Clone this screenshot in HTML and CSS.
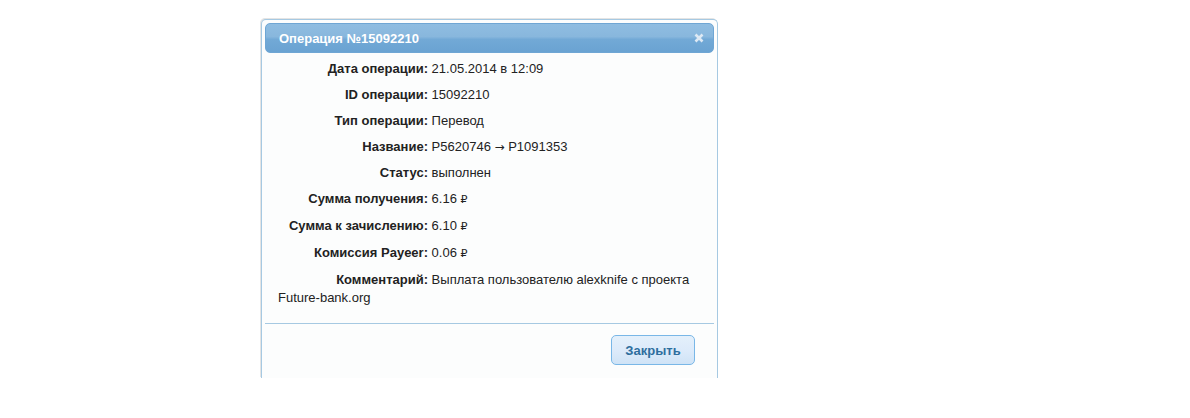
FILE: index.html
```html
<!DOCTYPE html>
<html lang="ru">
<head>
<meta charset="utf-8">
<title>Операция №15092210</title>
<link rel="stylesheet" href="styles.css">
</head>
<body>
<div class="page">
  <div class="dialog">
    <div class="titlebar">
      <span class="title">Операция №15092210</span>
      <svg class="close" width="10" height="10" viewBox="0 0 10 10"><path d="M1.5 1.5 L8.5 8.5 M8.5 1.5 L1.5 8.5" stroke="#dde9f4" stroke-width="2.6" stroke-linecap="butt"/></svg>
    </div>
    <div class="content">
      <div class="row"><span class="label">Дата операции:</span> 21.05.2014 в 12:09</div>
      <div class="row"><span class="label">ID операции:</span> 15092210</div>
      <div class="row"><span class="label">Тип операции:</span> Перевод</div>
      <div class="row"><span class="label">Название:</span> P5620746 <span class="arrow">→</span> P1091353</div>
      <div class="row"><span class="label">Статус:</span> выполнен</div>
      <div class="row"><span class="label">Сумма получения:</span> 6.16 <span class="rub">₽</span></div>
      <div class="row"><span class="label">Сумма к зачислению:</span> 6.10 <span class="rub">₽</span></div>
      <div class="row"><span class="label">Комиссия Payeer:</span> 0.06 <span class="rub">₽</span></div>
      <div class="row"><span class="label">Комментарий:</span> Выплата пользователю alexknife с проекта Future-bank.org</div>
    </div>
    <div class="buttonpane">
      <button class="btn" type="button">Закрыть</button>
    </div>
  </div>
</div>
</body>
</html>
```

FILE: styles.css
```css
html, body {
  margin: 0;
  padding: 0;
  background: #ffffff;
}

.page {
  padding: 18px 0 0 260px;
  font-family: "Liberation Sans", Arial, sans-serif;
}

.dialog {
  width: 449px;
  height: 355px;
  padding: 3px 3px 0 3px;
  border: 1px solid #a6c9e2;
  border-bottom: none;
  border-radius: 5px 5px 0 0;
  background: #fcfdfd;
  box-shadow: -1px -1px 0 #e4e4e4;
  margin-left: 1px;
  margin-top: 1px;
}

.titlebar {
  height: 28px;
  border: 1px solid #6fa6d4;
  border-radius: 5px;
  background: linear-gradient(to bottom, #8fbde1 0%, #88b7dd 45%, #72a9d6 55%, #6aa3d2 100%);
  display: flex;
  align-items: center;
  justify-content: space-between;
  padding: 0 9px 0 13px;
}

.title {
  color: #ffffff;
  font-weight: bold;
  font-size: 13px;
}

.close {
  display: block;
}

.content {
  padding: 7px 13px 16px 13px;
  font-size: 13px;
  color: #222222;
}

.row {
  line-height: 18px;
  margin-bottom: 8px;
}

.row:last-child {
  margin-bottom: 0;
}

.label {
  display: inline-block;
  width: 150px;
  text-align: right;
  font-weight: bold;
}

.arrow {
  font-family: "DejaVu Sans", sans-serif;
  font-size: 12px;
}

.rub {
  font-family: "DejaVu Sans", sans-serif;
  font-size: 11px;
}

.buttonpane {
  border-top: 1px solid #a6c9e2;
  display: flex;
  justify-content: flex-end;
  padding: 11px 19px 0 0;
}

.btn {
  width: 84px;
  height: 30px;
  border: 1px solid #79b7e7;
  border-radius: 5px;
  background: linear-gradient(to bottom, #e4f0fb 0%, #dceafa 55%, #cfe3f6 100%);
  color: #2e6e9e;
  font-family: "Liberation Sans", Arial, sans-serif;
  font-weight: bold;
  font-size: 13px;
  padding: 0;
}
```
